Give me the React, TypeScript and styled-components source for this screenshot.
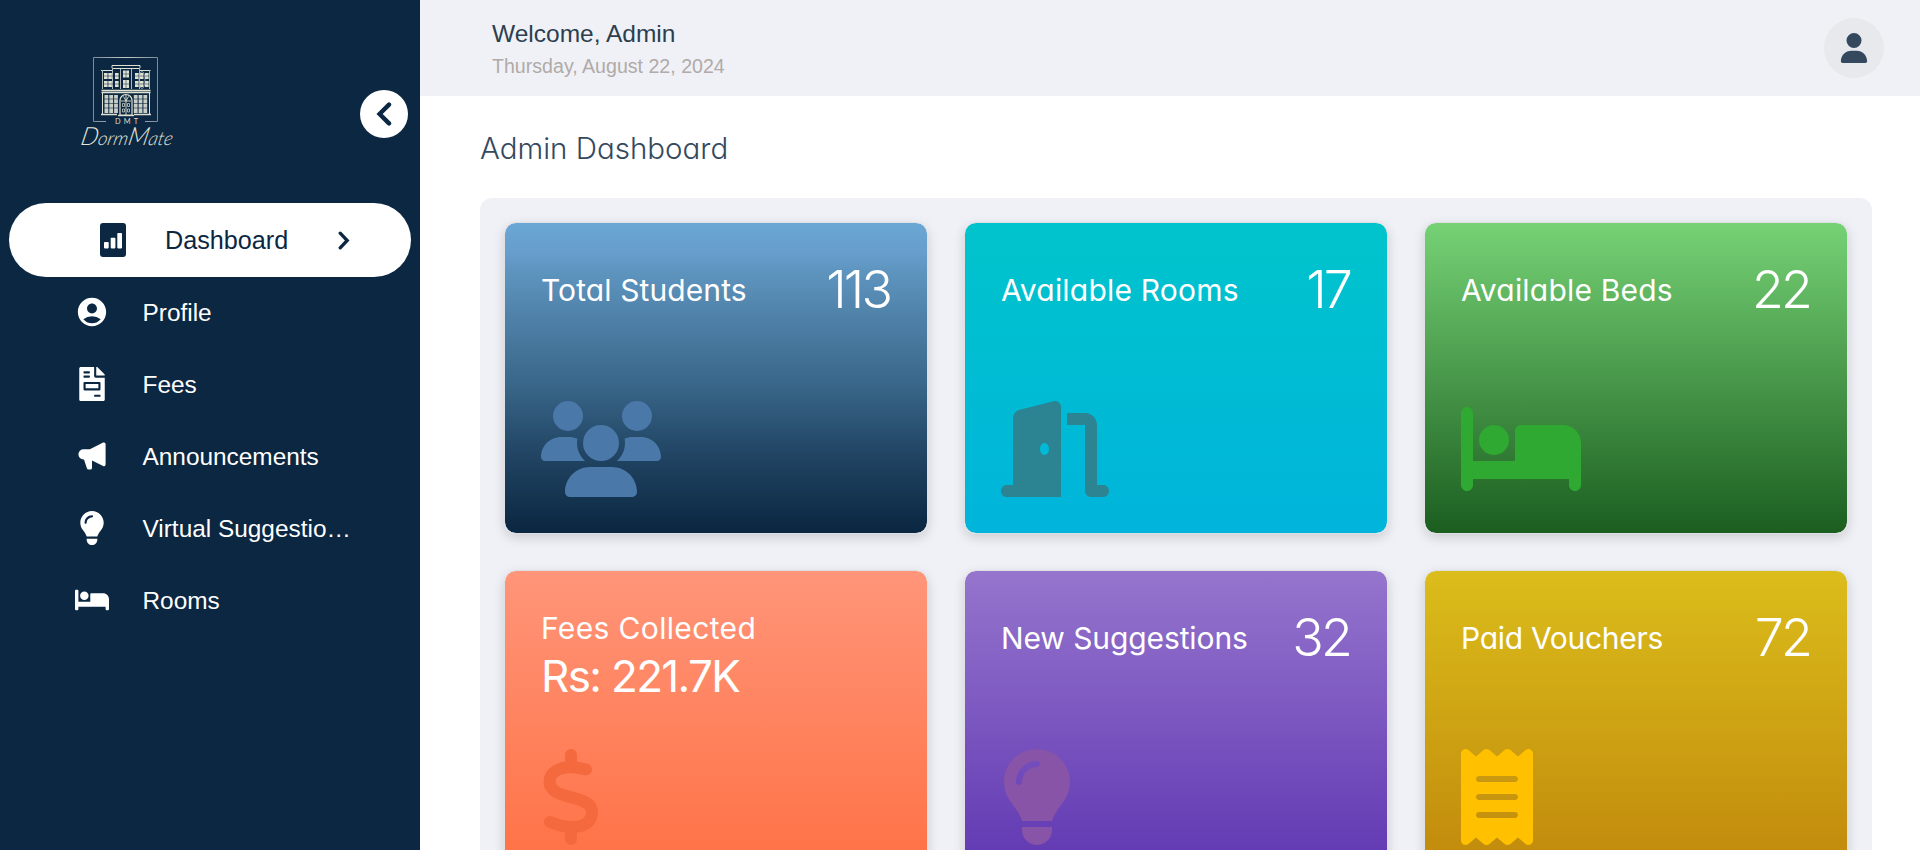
import React from 'react';
import styled, { createGlobalStyle } from 'styled-components';
import type { IconType } from 'react-icons';
import { FaBed as FaBedSmall, FaFileInvoice } from 'react-icons/fa';
import {
  FaBed,
  FaDollarSign,
  FaDoorOpen,
  FaLightbulb,
  FaReceipt,
  FaUser,
  FaUsers,
} from 'react-icons/fa6';
import { HiSpeakerphone } from 'react-icons/hi';
import { MdAccountCircle } from 'react-icons/md';

const navy = '#0b2741';
const mist = '#f0f1f6';
const display = `'Inter', 'Liberation Sans', sans-serif`;

const GlobalStyle = createGlobalStyle`
  *, *::before, *::after { box-sizing: border-box; }
  body {
    margin: 0;
    overflow: hidden;
    background: #fff;
    font-family: 'Liberation Sans', Arial, sans-serif;
  }
`;

const Shell = styled.div`
  display: flex;
  height: 850px;
  overflow: hidden;
`;

const Sidebar = styled.aside`
  width: 420px;
  flex: none;
  background: ${navy};
  color: #fff;
`;

const SidebarHead = styled.div`
  display: flex;
  justify-content: space-between;
  height: 203px;
  padding: 40px 12px 0 60px;
`;

const CollapseButton = styled.button`
  display: flex;
  align-items: center;
  justify-content: center;
  width: 48px;
  height: 48px;
  margin-top: 50px;
  padding: 0;
  border: 0;
  border-radius: 50%;
  background: #fff;
  color: ${navy};
`;

const Nav = styled.nav`
  display: flex;
  flex-direction: column;
`;

const NavItem = styled.a`
  display: flex;
  align-items: center;
  height: 72px;
  padding-left: 74px;
  font-size: 24.4px;
  line-height: 32px;
`;

const ActiveItem = styled(NavItem)`
  height: 74px;
  margin: 0 9px -1px;
  padding: 0 61px 0 86px;
  border-radius: 37px;
  background: #fff;
  color: ${navy};
  font-size: 25.2px;
`;

const NavIcon = styled.span`
  display: flex;
  justify-content: center;
  width: 36px;
  flex: none;
`;

const NavLabel = styled.span`
  margin-left: 32.5px;
  padding-top: 2px;
  white-space: nowrap;
`;

const ActiveLabel = styled.span`
  flex: 1;
  margin-left: 34px;
`;

const Main = styled.main`
  flex: 1;
  min-width: 0;
`;

const TopBar = styled.header`
  display: flex;
  align-items: center;
  justify-content: space-between;
  height: 96px;
  padding: 0 36px 0 72px;
  background: ${mist};
`;

const Welcome = styled.div`
  color: #2c3e50;
  font-size: 24.5px;
  line-height: 36px;
`;

const Today = styled.div`
  color: #b0aaa9;
  font-size: 19.6px;
  line-height: 29px;
`;

const Avatar = styled.div`
  display: flex;
  align-items: center;
  justify-content: center;
  width: 60px;
  height: 60px;
  border-radius: 50%;
  background: #e8e9ec;
  color: #34495e;
`;

const PageTitle = styled.h1`
  margin: 0;
  padding: 34px 0 32px 60px;
  color: #34495e;
  font: 300 29.5px/36px ${display};
  font-feature-settings: 'cv11';
`;

const Panel = styled.section`
  display: grid;
  grid-template-columns: repeat(3, 424px);
  grid-auto-rows: 312px;
  gap: 36px;
  width: 1392px;
  margin-left: 60px;
  padding: 24px;
  border-radius: 12px;
  background: ${mist};
`;

const Card = styled.article<{ $fill: string }>`
  display: flex;
  flex-direction: column;
  justify-content: space-between;
  padding: 36px;
  border: 1px solid #dfe0e4;
  border-radius: 12px;
  background: ${(p) => p.$fill};
  background-clip: padding-box;
  box-shadow: 0 4px 12px rgba(0, 0, 0, 0.15);
  color: #fff;
  font-family: ${display};
  font-feature-settings: 'cv11';
`;

const CardHead = styled.div`
  display: flex;
  align-items: center;
  justify-content: space-between;
  padding-top: 1px;
`;

const CardTitle = styled.h2<{ $track: number; $tall?: boolean }>`
  margin: 0;
  font-size: 30px;
  font-weight: 400;
  line-height: ${(p) => (p.$tall ? 43 : 36)}px;
  letter-spacing: ${(p) => p.$track}px;
  white-space: nowrap;
`;

const Count = styled.span`
  margin-right: 1px;
  font-size: 52px;
  font-weight: 300;
  line-height: 60px;
  letter-spacing: -2.9px;
`;

const Amount = styled.div`
  font-size: 44px;
  font-weight: 400;
  line-height: 52px;
  letter-spacing: -1.65px;
`;

const CardIcon = styled.div<{ $color: string; $width: number }>`
  height: 96px;
  color: ${(p) => p.$color};
  svg {
    display: block;
    width: ${(p) => p.$width}px;
    height: 96px;
  }
`;

const ChevronLeft = () => (
  <svg width="16" height="24" viewBox="0 0 16 24" fill="none" stroke="currentColor">
    <path d="M13 2.6L3.6 12L13 21.4" strokeWidth="4.4" strokeLinecap="round" />
  </svg>
);

const ChevronRight = () => (
  <svg width="12" height="19" viewBox="0 0 12 19" fill="none" stroke="currentColor">
    <path d="M2.2 2.2L9.2 9.5L2.2 16.8" strokeWidth="3.3" strokeLinecap="round" />
  </svg>
);

const ReportIcon = () => (
  <svg width="26" height="34" viewBox="0 0 26 34">
    <rect width="26" height="34" rx="3" fill={navy} />
    <g fill="#fff">
      <rect x="4" y="19" width="4.7" height="6.4" rx="0.8" />
      <rect x="10.7" y="14.7" width="4.7" height="10.7" rx="0.8" />
      <rect x="17.3" y="10" width="4.7" height="15.4" rx="0.8" />
    </g>
  </svg>
);

const Logo = () => (
  <svg width="130" height="125" viewBox="0 0 130 125" fill="none">
    <defs>
      <linearGradient id="frame" x1="0" x2="1">
        <stop offset="0" stopColor="#7d8c99" />
        <stop offset="0.5" stopColor="#c3c9c6" />
        <stop offset="1" stopColor="#7d8c99" />
      </linearGradient>
    </defs>
    <path d="M46 81.5H33.5V17.5H97.5V81.5H85" stroke="url(#frame)" strokeWidth="1" />
    <g stroke="#dfe2d2" strokeWidth="1">
      <path d="M52 28V25.5H80V28M41 30.5H52M80 30.5H90.5M52 28.5H80" />
      <path
        d="M42.5 30V49M89.5 30V49M52.5 28V49M79.5 28V49M60.5 29V49M71.5 29V49"
        stroke="#aeb8b6"
      />
      <path d="M41.5 50.5H90.5M41.5 52.5H90.5" strokeWidth="1.3" />
      <path d="M42.5 53V74M89.5 53V74" />
      <path d="M41 74.5H57M74 74.5H91" strokeWidth="1.6" />
      <path d="M58 75.5H74" strokeWidth="1.4" />
    </g>
    <g fill="#dfe2d2">
      {[44, 48.3, 55, 75, 79.9, 85].map((x) => (
        <path key={x} d={`M${x} 33h3.6v6h-3.6zM${x} 41h3.6v6h-3.6z`} />
      ))}
      <path d="M63 30.5h6v7h-6zM63 40h6v8h-6z" />
    </g>
    <path
      d="M44 36H59M75 36H89M44 44H59M75 44H89M63 34H69M63 44H69M66 30V48"
      stroke={navy}
      strokeWidth="0.5"
    />
    <ellipse cx="82" cy="40" rx="3" ry="8.5" stroke="#a3afae" strokeWidth="0.8" />
    <g fill="#c9cfc6">
      {[44.5, 49.3, 54.1, 73.8, 78.6, 83.4].map((x) => (
        <rect key={x} x={x} y="55" width="3.8" height="18" />
      ))}
    </g>
    <path
      d="M44 59H58M44 63.5H58M44 68H58M73 59H88M73 63.5H88M73 68H88"
      stroke={navy}
      strokeWidth="0.6"
    />
    <path d="M60 75V60.5a6 6 0 0 1 12 0V75z" fill={navy} stroke="#dfe2d2" strokeWidth="1.2" />
    <path d="M61 61H71M66 55V75M63.5 56.5L66 61L68.5 56.5" stroke="#dfe2d2" strokeWidth="0.9" />
    <path
      d="M62.5 63.5h2v3h-2zM67.5 63.5h2v3h-2zM62.5 69h2v3h-2zM67.5 69h2v3h-2z"
      stroke="#c9cfc6"
      strokeWidth="0.8"
    />
    <text x="55" y="84" fill="#d8dccf" fontFamily="Lato, sans-serif" fontSize="7.4" textLength="23">
      DMT
    </text>
    <text
      x="20"
      y="105"
      fill="#e4e6da"
      fontFamily="Lato, sans-serif"
      fontSize="19"
      fontStyle="italic"
      fontWeight="300"
      textLength="92"
      lengthAdjust="spacingAndGlyphs"
      transform="skewX(-12) translate(22 0)"
    >
      <tspan fontSize="25">D</tspan>orm<tspan fontSize="25">M</tspan>ate
    </text>
  </svg>
);

const navItems: { label: string; Icon: IconType }[] = [
  { label: 'Profile', Icon: MdAccountCircle },
  { label: 'Fees', Icon: FaFileInvoice },
  { label: 'Announcements', Icon: HiSpeakerphone },
  { label: 'Virtual Suggestio…', Icon: FaLightbulb },
  { label: 'Rooms', Icon: FaBedSmall },
];

interface Stat {
  title: string;
  track: number;
  count?: string;
  amount?: string;
  Icon: IconType;
  iconWidth: number;
  iconColor: string;
  fill: string;
}

const stats: Stat[] = [
  {
    title: 'Total Students',
    track: 0.1,
    count: '113',
    Icon: FaUsers,
    iconWidth: 120,
    iconColor: '#4a78a9',
    fill: 'linear-gradient(#6aa7d5, #669dcd 10%, #5d94be 16%, #4a7aa0 36%, #3a688b 51%, #234766 73%, #0a2640)',
  },
  {
    title: 'Available Rooms',
    track: 0.2,
    count: '17',
    Icon: FaDoorOpen,
    iconWidth: 108,
    iconColor: '#2c8391',
    fill: 'linear-gradient(#00c4cc, #00b4db)',
  },
  {
    title: 'Available Beds',
    track: 0.2,
    count: '22',
    Icon: FaBed,
    iconWidth: 120,
    iconColor: '#2fa932',
    fill: 'linear-gradient(#76d275, #1b5e20)',
  },
  {
    title: 'Fees Collected',
    track: 0.35,
    amount: 'Rs: 221.7K',
    Icon: FaDollarSign,
    iconWidth: 60,
    iconColor: '#f5693e',
    fill: 'linear-gradient(#ff9579, #ff7043)',
  },
  {
    title: 'New Suggestions',
    track: -0.1,
    count: '32',
    Icon: FaLightbulb,
    iconWidth: 72,
    iconColor: '#8754a7',
    fill: 'linear-gradient(#9575cd, #5e35b1)',
  },
  {
    title: 'Paid Vouchers',
    track: -0.3,
    count: '72',
    Icon: FaReceipt,
    iconWidth: 72,
    iconColor: '#ffc000',
    fill: 'linear-gradient(#dbbd1b, #c0870b)',
  },
];

const StatCard = ({ stat }: { stat: Stat }) => (
  <Card $fill={stat.fill}>
    {stat.amount ? (
      <div>
        <CardTitle $track={stat.track} $tall>
          {stat.title}
        </CardTitle>
        <Amount>{stat.amount}</Amount>
      </div>
    ) : (
      <CardHead>
        <CardTitle $track={stat.track}>{stat.title}</CardTitle>
        <Count>{stat.count}</Count>
      </CardHead>
    )}
    <CardIcon $color={stat.iconColor} $width={stat.iconWidth}>
      <stat.Icon />
    </CardIcon>
  </Card>
);

export default function App() {
  return (
    <>
      <GlobalStyle />
      <Shell>
        <Sidebar>
          <SidebarHead>
            <Logo />
            <CollapseButton aria-label="Collapse menu">
              <ChevronLeft />
            </CollapseButton>
          </SidebarHead>
          <Nav>
            <ActiveItem>
              <NavIcon>
                <ReportIcon />
              </NavIcon>
              <ActiveLabel>Dashboard</ActiveLabel>
              <ChevronRight />
            </ActiveItem>
            {navItems.map(({ label, Icon }) => (
              <NavItem key={label}>
                <NavIcon>
                  <Icon size={34} />
                </NavIcon>
                <NavLabel>{label}</NavLabel>
              </NavItem>
            ))}
          </Nav>
        </Sidebar>
        <Main>
          <TopBar>
            <div>
              <Welcome>Welcome, Admin</Welcome>
              <Today>Thursday, August 22, 2024</Today>
            </div>
            <Avatar>
              <FaUser size={30} />
            </Avatar>
          </TopBar>
          <PageTitle>Admin Dashboard</PageTitle>
          <Panel>
            {stats.map((stat) => (
              <StatCard key={stat.title} stat={stat} />
            ))}
          </Panel>
        </Main>
      </Shell>
    </>
  );
}
